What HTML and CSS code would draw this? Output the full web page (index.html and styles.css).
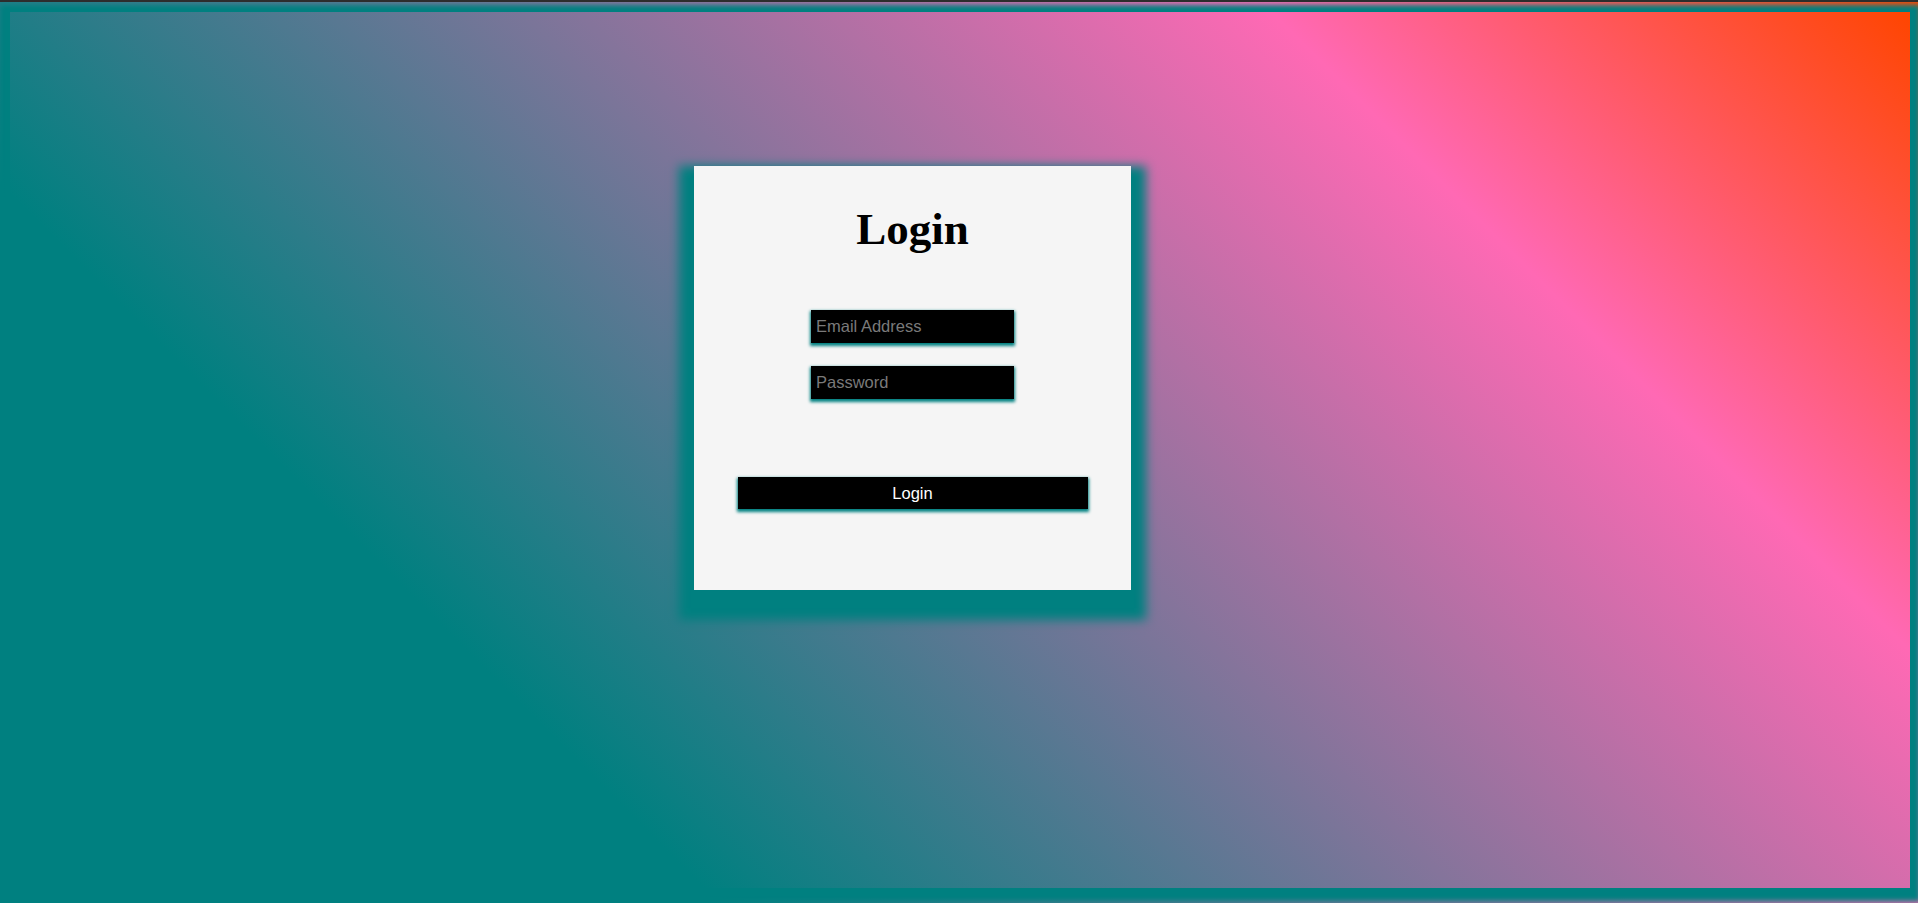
FILE: index.html
```html
<!DOCTYPE html>
<html lang="en">
<head>
<meta charset="utf-8">
<title>Login</title>
<link rel="stylesheet" href="styles.css">
</head>
<body>
<div class="topbar"></div>
<div class="frame">
  <main class="screen">
    <form class="card">
      <h1 class="title">Login</h1>
      <input class="field field-email" type="email" placeholder="Email Address">
      <input class="field field-password" type="password" placeholder="Password">
      <button class="submit" type="button">Login</button>
    </form>
  </main>
</div>
</body>
</html>
```
FILE: styles.css
```css
html, body {
  margin: 0;
  padding: 0;
  height: 100%;
}
body {
  display: flex;
  flex-direction: column;
  background: #008080;
  overflow: hidden;
}
.topbar {
  height: 2px;
  flex: 0 0 2px;
  background: #2d2d2d;
}
.frame {
  flex: 1;
  display: flex;
  padding: 10px 8px 15px 10px;
  background: linear-gradient(45deg, #008080 25%, #ff69b4 77%, #ff4500 100%);
  overflow: hidden;
}
.screen {
  flex: 1;
  display: flex;
  align-items: flex-start;
  background: linear-gradient(45deg, #008080 25%, #ff69b4 77%, #ff4500 100%);
  box-shadow: 0 3px 5px 10px #008080;
}
.card {
  box-sizing: border-box;
  width: 23%;
  height: 424px;
  margin: 154px 0 0 36%;
  padding-top: 41px;
  background: #f5f5f5;
  box-shadow: 0 15px 10px 15px #008080;
  display: flex;
  flex-direction: column;
  align-items: center;
}
.title {
  margin: 0;
  font-family: "Liberation Serif", "Times New Roman", serif;
  font-weight: bold;
  font-size: 45px;
  line-height: 44px;
  color: #000;
}
.field {
  box-sizing: border-box;
  width: 203px;
  height: 33px;
  margin: 0;
  padding: 0 5px;
  border: none;
  outline: none;
  background: #000;
  color: #fff;
  font-family: "Liberation Sans", Arial, sans-serif;
  font-size: 16.5px;
  box-shadow: 0 2px 3px 1px #008080;
}
.field::placeholder {
  color: #7a7a7a;
  opacity: 1;
}
.field-email {
  margin-top: 59px;
}
.field-password {
  margin-top: 23px;
}
.submit {
  box-sizing: border-box;
  width: 350px;
  height: 32px;
  margin-top: 78px;
  padding: 0;
  border: none;
  background: #000;
  color: #fff;
  font-family: "Liberation Sans", Arial, sans-serif;
  font-size: 16.5px;
  box-shadow: 0 2px 3px 1px #008080;
  cursor: pointer;
}
```
